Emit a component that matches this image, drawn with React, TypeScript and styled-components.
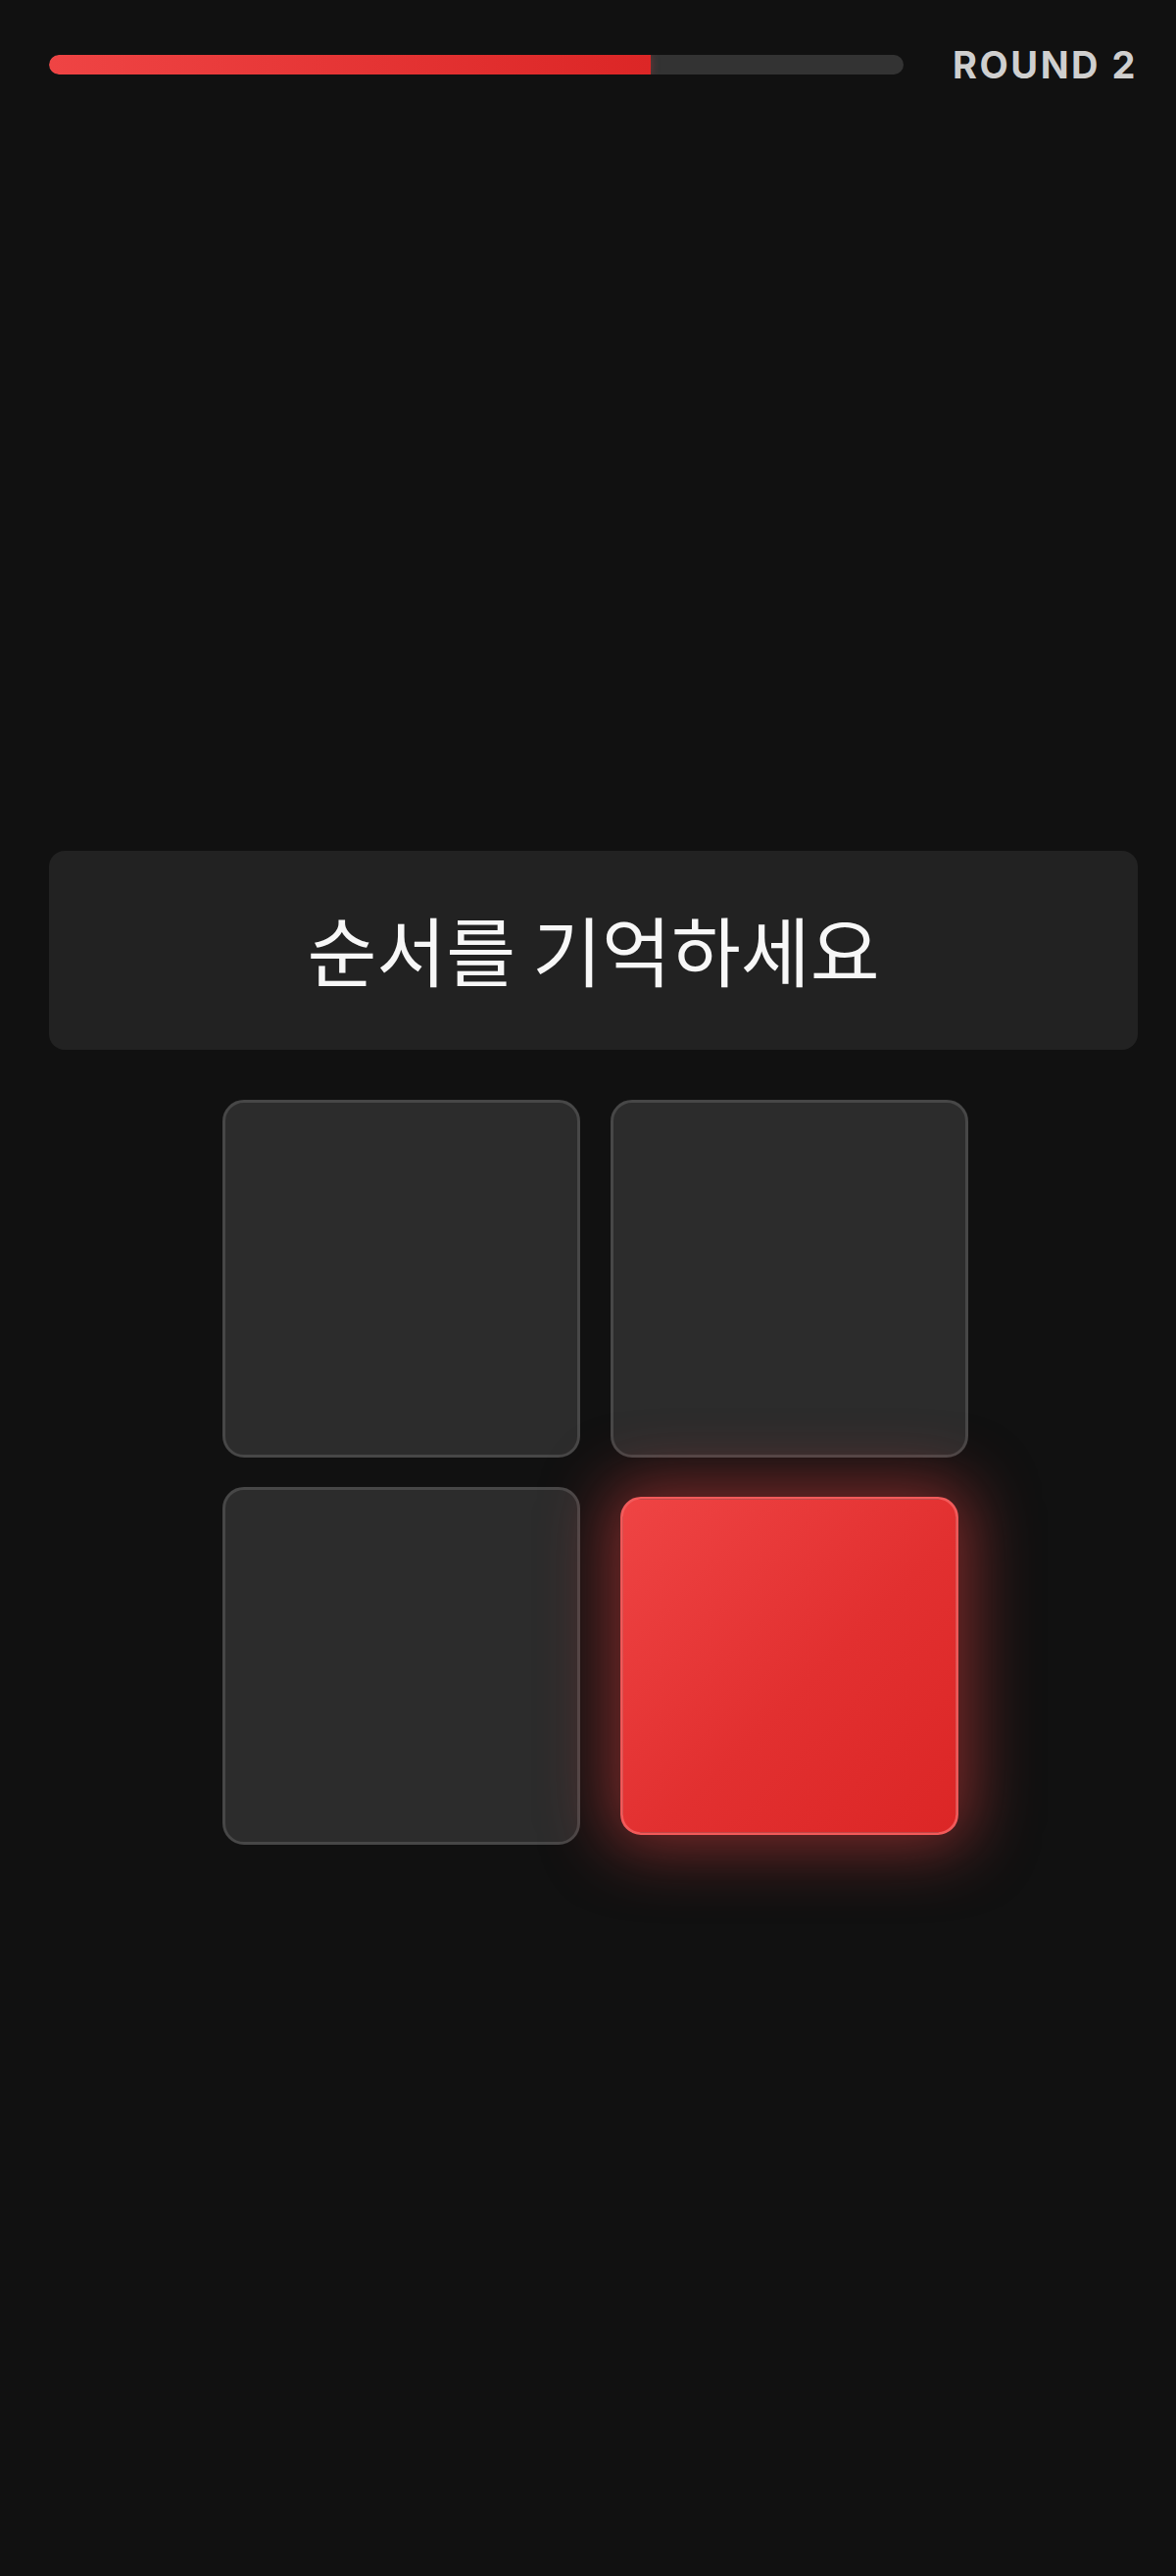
import React from "react";
import styled, { createGlobalStyle } from "styled-components";

const GlobalStyle = createGlobalStyle`
  html, body {
    margin: 0;
    padding: 0;
    background: #111111;
  }
  body {
    font-family: Inter, "Noto Sans", "Noto Sans CJK KR", sans-serif;
    color: #f5f5f5;
  }
  * { box-sizing: border-box; }
`;

const Page = styled.div`
  min-height: 2628px;
  background: #111111;
  display: flex;
  flex-direction: column;
  padding: 0 39px 0 50px;
`;

const Header = styled.header`
  display: flex;
  align-items: center;
  gap: 50px;
  padding-top: 46px;
  height: 86px;
`;

const Track = styled.div`
  flex: 1;
  height: 20px;
  border-radius: 10px;
  background: #333333;
  overflow: hidden;
`;

const Fill = styled.div`
  height: 100%;
  border-radius: 10px 0 0 10px;
  background: linear-gradient(90deg, #ef4444 0%, #dc2626 100%);
  box-shadow: 0 0 8px rgba(239, 68, 68, 0.35);
`;

const RoundLabel = styled.span`
  font-family: Inter, "Liberation Sans", sans-serif;
  font-weight: 700;
  font-size: 38px;
  line-height: 40px;
  letter-spacing: 2.5px;
  color: #cfcfcf;
  white-space: nowrap;
`;

const Main = styled.main`
  display: flex;
  flex-direction: column;
  align-items: center;
  padding-top: 782px;
`;

const Prompt = styled.div`
  width: 100%;
  height: 203px;
  border-radius: 16px;
  background: #222222;
  display: flex;
  align-items: center;
  justify-content: center;
`;

const PromptText = styled.h1`
  margin: 0 0 4px;
  font-family: "Noto Sans CJK KR", "Noto Sans", sans-serif;
  font-weight: 400;
  font-size: 77px;
  line-height: 1;
  color: #f7f7f7;
`;

const Grid = styled.div`
  margin-top: 51px;
  margin-left: 3px;
  display: grid;
  grid-template-columns: repeat(2, 365px);
  grid-auto-rows: 365px;
  gap: 30px 31px;
`;

const Cell = styled.div<{ $active?: boolean }>`
  border-radius: 22px;
  border: 3px solid ${(p) => (p.$active ? "#f25a5a" : "#474747")};
  background: ${(p) =>
    p.$active
      ? "linear-gradient(135deg, #ef4444 0%, #e23030 55%, #dc2626 100%)"
      : "#2c2c2c"};
  box-shadow: ${(p) =>
    p.$active ? "0 0 70px 12px rgba(239, 68, 68, 0.5)" : "none"};
  transform: ${(p) => (p.$active ? "scale(0.945)" : "none")};
`;

const cells = [false, false, false, true];

export default function App() {
  return (
    <>
      <GlobalStyle />
      <Page>
        <Header>
          <Track>
            <Fill style={{ width: `${(612 / 869) * 100}%` }} />
          </Track>
          <RoundLabel>ROUND 2</RoundLabel>
        </Header>
        <Main>
          <Prompt>
            <PromptText>순서를 기억하세요</PromptText>
          </Prompt>
          <Grid>
            {cells.map((active, i) => (
              <Cell key={i} $active={active} />
            ))}
          </Grid>
        </Main>
      </Page>
    </>
  );
}
